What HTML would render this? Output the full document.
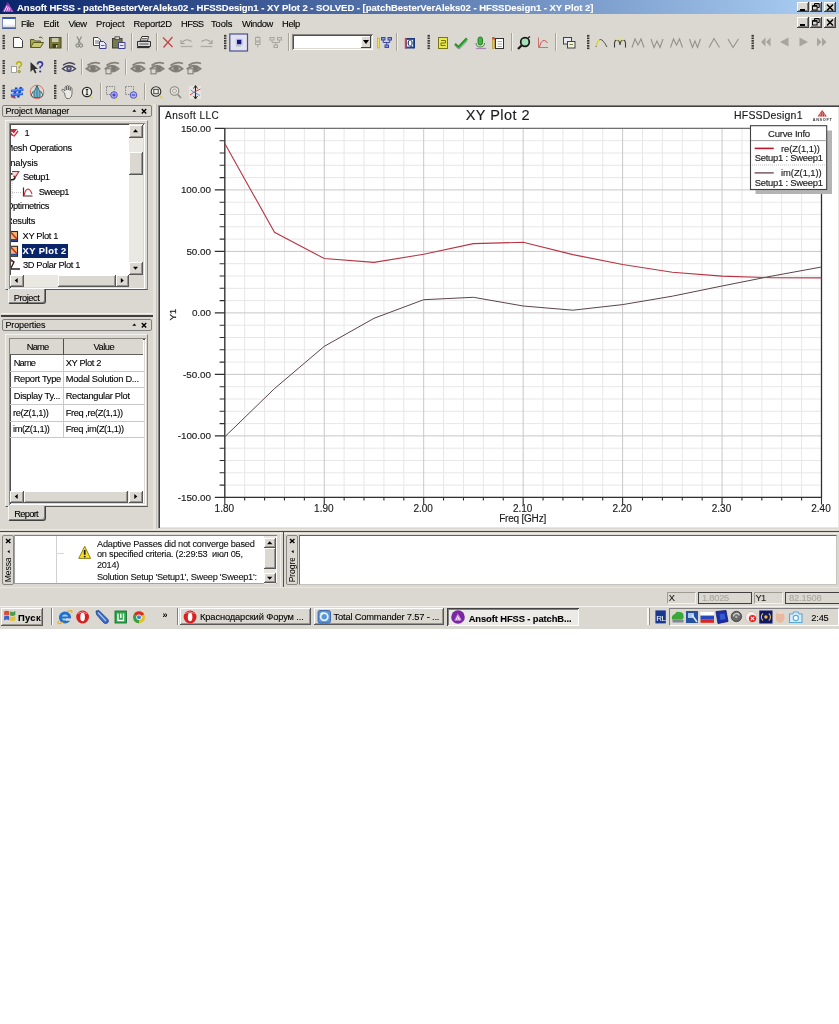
<!DOCTYPE html>
<html lang="en">
<head>
<meta charset="utf-8">
<title>Ansoft HFSS - XY Plot 2</title>
<style>
html,body{margin:0;padding:0;background:#fff;}
body{width:839px;height:1024px;position:relative;overflow:hidden;font-family:"Liberation Sans","DejaVu Sans",sans-serif;font-size:9px;color:#000;}
.abs{position:absolute;}
#app{position:absolute;left:0;top:0;width:839px;height:629px;background:#dbd8d1;overflow:hidden;will-change:transform;}
.t{position:absolute;white-space:pre;line-height:1;-webkit-text-stroke:0.1px currentColor;}
#titlebar{position:absolute;left:0;top:0;width:839px;height:14px;background:linear-gradient(to right,#0a246a 0%,#a6caf0 96%);}
#titlebar .t{color:#fff;font-weight:bold;font-size:9.55px;top:2.6px;left:17px;letter-spacing:-0.05px;}
.wbtn{position:absolute;width:12px;height:11px;background:#dbd8d1;box-shadow:inset -1px -1px 0 #404040,inset 1px 1px 0 #fff,inset -2px -2px 0 #808080;}
.menu .t{font-size:9.3px;top:18px;}
.grip{position:absolute;width:2px;height:17px;background:repeating-linear-gradient(to bottom,#404040 0,#404040 1.6px,#dbd8d1 1.6px,#dbd8d1 2.5px);}
.sep{position:absolute;width:1px;height:18px;background:#808080;box-shadow:1px 0 0 #fff;}
.sunken{position:absolute;background:#fff;box-shadow:inset 1px 1px 0 #8a8680,inset -1px -1px 0 #fff,inset 2px 2px 0 #505050,inset -2px -2px 0 #dbd8d1;}
.raised{position:absolute;background:#dbd8d1;box-shadow:inset -1px -1px 0 #585858,inset 1px 1px 0 #fff,inset -2px -2px 0 #9a968e;}
.panelhdr{position:absolute;height:12px;border:1px solid #808080;border-radius:2px;box-sizing:border-box;}
.ic{position:absolute;}
</style>
</head>
<body>
<div id="app">
<!--TITLEBAR-->
<div id="titlebar">
<svg class="ic" style="left:2px;top:2px" width="12" height="11" viewBox="0 0 12 11"><path d="M0 10 L5.5 0 L11.5 10 Z" fill="#7a2aa8"/><path d="M2.2 9.5 L5.2 3.6 M4.6 9.5 L6.4 4.6 M7 9.5 L7.4 5.6" stroke="#ffd0ff" stroke-width="1.1" fill="none"/><path d="M5.5 0 L11.5 10 L9 10 Z" fill="#c050c8"/></svg>
<span class="t">Ansoft HFSS - patchBesterVerAleks02 - HFSSDesign1 - XY Plot 2 - SOLVED - [patchBesterVerAleks02 - HFSSDesign1 - XY Plot 2]</span>
</div>
<!-- window buttons row 1 -->
<div class="wbtn" style="left:797px;top:1.500px;height:10.800px"><div class="abs" style="left:3px;top:7px;width:5px;height:2px;background:#000"></div></div>
<div class="wbtn" style="left:810px;top:1.500px;height:10.800px"><svg class="abs" style="left:2px;top:1px" width="8" height="8" viewBox="0 0 8 8"><path d="M2.5 0.8 H7.2 V4.5 H5.5 M2.5 0.8 V2.5" fill="none" stroke="#000" stroke-width="1"/><path d="M2.5 0.4 H7.2" stroke="#000" stroke-width="1.2"/><rect x="0.5" y="3" width="4.6" height="4" fill="none" stroke="#000" stroke-width="1"/><path d="M0.5 2.8 H5.1" stroke="#000" stroke-width="1.4"/></svg></div>
<div class="wbtn" style="left:824px;top:1.500px;height:10.800px"><svg class="abs" style="left:2px;top:2px" width="8" height="7" viewBox="0 0 8 7"><path d="M1 0.5 L7 6.5 M7 0.5 L1 6.5" stroke="#000" stroke-width="1.5"/></svg></div>
<!-- window buttons row 2 (MDI child) -->
<div class="wbtn" style="left:797px;top:16.800px;height:11.200px"><div class="abs" style="left:3px;top:7px;width:5px;height:2px;background:#000"></div></div>
<div class="wbtn" style="left:810px;top:16.800px;height:11.200px"><svg class="abs" style="left:2px;top:1px" width="8" height="8" viewBox="0 0 8 8"><path d="M2.5 0.8 H7.2 V4.5 H5.5 M2.5 0.8 V2.5" fill="none" stroke="#000" stroke-width="1"/><path d="M2.5 0.4 H7.2" stroke="#000" stroke-width="1.2"/><rect x="0.5" y="3" width="4.6" height="4" fill="none" stroke="#000" stroke-width="1"/><path d="M0.5 2.8 H5.1" stroke="#000" stroke-width="1.4"/></svg></div>
<div class="wbtn" style="left:824px;top:16.800px;height:11.200px"><svg class="abs" style="left:2px;top:2px" width="8" height="7" viewBox="0 0 8 7"><path d="M1 0.5 L7 6.5 M7 0.5 L1 6.5" stroke="#000" stroke-width="1.5"/></svg></div>

<!--MENU-->
<div class="menu">
<div class="abs" style="left:1.500px;top:16.500px;width:14px;height:11.500px;background:linear-gradient(to bottom,#fff 0,#fff 60%,#d8dce8 100%);border:1px solid #7088c0;border-top:2.500px solid #3058b0;box-sizing:border-box;box-shadow:0 1px 0 #506090"></div>
<span class="t" style="left:21.0px;top:18.7px;font-size:9.4px;letter-spacing:-0.537px;">File</span>
<span class="t" style="left:43.5px;top:18.7px;font-size:9.4px;letter-spacing:-0.175px;">Edit</span>
<span class="t" style="left:68.5px;top:18.7px;font-size:9.4px;letter-spacing:-0.551px;">View</span>
<span class="t" style="left:96.0px;top:18.7px;font-size:9.4px;letter-spacing:-0.108px;">Project</span>
<span class="t" style="left:133.5px;top:18.7px;font-size:9.4px;letter-spacing:-0.216px;">Report2D</span>
<span class="t" style="left:181.0px;top:18.7px;font-size:9.4px;letter-spacing:-0.643px;">HFSS</span>
<span class="t" style="left:211.0px;top:18.7px;font-size:9.4px;letter-spacing:-0.089px;">Tools</span>
<span class="t" style="left:242.0px;top:18.7px;font-size:9.4px;letter-spacing:-0.406px;">Window</span>
<span class="t" style="left:282.0px;top:18.7px;font-size:9.4px;letter-spacing:-0.333px;">Help</span>
</div>
<!--TOOLBARS-->
<svg class="abs" style="left:0;top:0" width="839" height="106" viewBox="0 0 839 106">
<defs>
<pattern id="gp" width="3" height="2.5" patternUnits="userSpaceOnUse"><rect width="3" height="1.7" fill="#3a3a3a"/></pattern>
</defs>
<!-- grips -->
<g fill="url(#gp)">
<rect x="2.5" y="34" width="2.4" height="16"/><rect x="224" y="34" width="2.4" height="16"/><rect x="427.5" y="34" width="2.4" height="16"/><rect x="587" y="34" width="2.4" height="16"/><rect x="751.5" y="34" width="2.4" height="16"/>
<rect x="2.5" y="60" width="2.4" height="14"/><rect x="54" y="60" width="2.4" height="14"/>
<rect x="2.5" y="84" width="2.4" height="15"/><rect x="54" y="84" width="2.4" height="15"/>
</g>
<!-- separators -->
<g stroke="#a8a49c" stroke-width="1">
<path d="M67.5 33V51M131.500 33V51M156.500 33V51M288.500 33V51M396.500 33V51M511.500 33V51M555.500 33V51"/>
<path d="M81.500 59V75M125.500 59V75"/>
<path d="M100.500 83V100M144.500 83V100"/>
</g>
<g stroke="#efede8" stroke-width="1">
<path d="M68.5 33V51M132.500 33V51M157.500 33V51M289.500 33V51M397.500 33V51M512.500 33V51M556.500 33V51"/>
<path d="M82.500 59V75M126.500 59V75"/>
<path d="M101.500 83V100M145.500 83V100"/>
</g>
<!-- ROW 1 -->
<!-- new -->
<path d="M13.500 37.500H19.500L22.500 40.500V47.500H13.500Z" fill="#fff" stroke="#404040" stroke-width="1"/>
<!-- open -->
<path d="M30.500 47V39.500H34L35.500 41H40.500V47Z" fill="#a8a850" stroke="#5a5a20" stroke-width="1"/><path d="M30.500 47.500L33.500 42.500H43.500L40.500 47.500Z" fill="#c8c870" stroke="#5a5a20" stroke-width="1"/><path d="M39 37.500Q41.500 36 42.500 38.500" fill="none" stroke="#5a5a20" stroke-width="1"/>
<!-- save -->
<rect x="49.500" y="37.500" width="11.500" height="10.500" fill="#787838" stroke="#484818" stroke-width="1"/><rect x="52" y="38" width="6.500" height="4" fill="#c8c8b0"/><rect x="52.500" y="44" width="5.500" height="4" fill="#404018"/><rect x="56" y="45" width="1.500" height="2.500" fill="#d0d0c0"/>
<!-- cut (gray) -->
<path d="M77 36.500L80.500 43.500M81.500 36.500L78 43.500" stroke="#8a8a86" stroke-width="1.200" fill="none"/><circle cx="77.500" cy="45.500" r="1.600" fill="none" stroke="#8a8a86" stroke-width="1.100"/><circle cx="81" cy="45.500" r="1.600" fill="none" stroke="#8a8a86" stroke-width="1.100"/>
<!-- copy -->
<path d="M93.500 37.500H98L100.500 40V45.500H93.500Z" fill="#fff" stroke="#404050" stroke-width="1"/><path d="M95 41H99M95 43H99" stroke="#404050" stroke-width="0.800"/>
<path d="M99.500 41.500H103.500L106 44V48.500H99.500Z" fill="#e8e8ff" stroke="#40408a" stroke-width="1"/><path d="M101 45.500H104.500" stroke="#40408a" stroke-width="0.800"/>
<!-- paste -->
<rect x="112.500" y="38.500" width="9.500" height="9.500" fill="#787850" stroke="#404030" stroke-width="1"/><rect x="115" y="36.800" width="4.500" height="2.800" fill="#d0d0d0" stroke="#404040" stroke-width="0.800"/>
<path d="M118.500 42.500H125V48.500H118.500Z" fill="#e8e8ff" stroke="#40408a" stroke-width="1"/><path d="M120 45.500H123.500" stroke="#40408a" stroke-width="0.800"/>
<!-- print -->
<path d="M140 41L142 36.500H148.500L147.500 41Z" fill="#fff" stroke="#303030" stroke-width="1"/><path d="M137.500 41.500H150.500V46.500H137.500Z" fill="#d8d8d8" stroke="#303030" stroke-width="1"/><path d="M137 47.500H149.500" stroke="#303030" stroke-width="1.300"/><path d="M142 38.500H147M141.500 40H146.500" stroke="#303030" stroke-width="0.700"/><path d="M139.500 44H148.500" stroke="#303030" stroke-width="0.800"/>
<!-- delete X -->
<path d="M163 37.500L172.500 47M172.500 37L163.500 47.500" stroke="#c84444" stroke-width="1.250" fill="none"/>
<!-- undo redo gray -->
<path d="M182 42.500Q186 37.500 191.500 41.500" fill="none" stroke="#a09c96" stroke-width="1.100"/><path d="M181 40V43.500H184.500" fill="none" stroke="#a09c96" stroke-width="1.100"/><path d="M180.500 46.500H192.500" stroke="#b0aca6" stroke-width="1.300"/>
<path d="M211 42.500Q207 37.500 201.500 41.500" fill="none" stroke="#a09c96" stroke-width="1.100"/><path d="M212 40V43.500H208.500" fill="none" stroke="#a09c96" stroke-width="1.100"/><path d="M200.500 46.500H212.500" stroke="#b0aca6" stroke-width="1.300"/>
<!-- pressed select button -->
<rect x="229.800" y="34" width="17.700" height="17" fill="#e2e2f0" stroke="#48508a" stroke-width="1.200"/><rect x="235.500" y="38.500" width="7.400" height="7" fill="#c8c8ec"/><rect x="237" y="39.800" width="4.300" height="4.400" fill="#181878"/><path d="M236 46H241" stroke="#98b098" stroke-width="0.800"/>
<!-- gray icons -->
<g stroke="#a8a49e" stroke-width="1" fill="none"><rect x="255.500" y="37.500" width="4.500" height="3.500"/><rect x="255.500" y="42" width="4.500" height="2.500"/><path d="M257.750 36V37.500M257.750 44.500V47.500"/></g>
<g stroke="#a8a49e" stroke-width="1" fill="none"><rect x="270" y="37.500" width="4" height="2.500"/><rect x="277.500" y="37.500" width="4" height="2.500"/><path d="M272 40V42.500H279.500V40M275.750 42.500V45"/><rect x="274" y="45" width="3.500" height="2.500"/></g>
<!-- yellow/blue tree icon -->
<g><rect x="377.500" y="38" width="2.200" height="10" fill="#f0e060" stroke="#b09820" stroke-width="0.500"/><g stroke="#3848a8" stroke-width="1" fill="#8898e0"><rect x="381.500" y="37.500" width="3.500" height="2.500"/><rect x="388" y="37.500" width="3.500" height="2.500"/><rect x="385" y="45" width="3.500" height="2.500"/></g><path d="M383.250 40V42.500H389.750V40M386.750 42.500V45" stroke="#3848a8" stroke-width="1" fill="none"/></g>
<!-- Q icon -->
<rect x="405.500" y="38.500" width="9" height="9.500" fill="#2858b0" stroke="#183878" stroke-width="1"/><rect x="407" y="40" width="6" height="6.500" fill="#fff"/><rect x="404.800" y="38" width="1.800" height="10.500" fill="#d84040"/><text x="407.300" y="46" font-family="Liberation Serif, serif" font-size="7.500" font-weight="bold" fill="#183878">Q</text>
<!-- yellow doc -->
<rect x="438.500" y="37.500" width="9" height="11" fill="#e8e850" stroke="#787818" stroke-width="1"/><path d="M441 40.500H445.500V43H441V45.500H445.500" fill="none" stroke="#686810" stroke-width="0.900"/>
<!-- green check -->
<path d="M455 44L458.500 47.500L467 38.500" fill="none" stroke="#38a838" stroke-width="2.600"/><path d="M456 46.500L459.500 49L467.500 41" fill="none" stroke="#a070b0" stroke-width="0.900" opacity="0.700"/><path d="M455 43.500L458.500 46.500L466.500 38" fill="none" stroke="#1a7a1a" stroke-width="0.800"/>
<!-- green mic -->
<rect x="478" y="37" width="4.500" height="8" rx="2.200" fill="#48b048" stroke="#1a7a1a" stroke-width="0.900"/><path d="M476 43Q476 47 480.250 47Q484.500 47 484.500 43" fill="none" stroke="#488848" stroke-width="1"/><path d="M476 48.500H486" stroke="#a070b0" stroke-width="1.200" opacity="0.800"/>
<!-- doc list -->
<rect x="495.500" y="38.500" width="8" height="10" fill="#fff" stroke="#303030" stroke-width="1"/><path d="M497.500 41.500H502M497.500 44H502M497.500 46.500H502" stroke="#707070" stroke-width="0.600"/><rect x="492.500" y="37.500" width="2.200" height="11" fill="#e8c850" stroke="#a07818" stroke-width="0.500"/><rect x="492.500" y="37.500" width="2.200" height="2" fill="#d84040"/>
<!-- magnifier w/ green -->
<circle cx="525" cy="42" r="4.300" fill="#a8e0b8" stroke="#181818" stroke-width="1.700"/><path d="M521.500 45.500L518 49" stroke="#181818" stroke-width="2.200"/><path d="M528 38L530 36.500" stroke="#181818" stroke-width="1.200"/>
<!-- red plot -->
<path d="M538.500 37.500V47.500H548" fill="none" stroke="#c86868" stroke-width="0.900"/><path d="M539.500 47Q541 40 544.500 40.500Q546.500 41 547.500 43" fill="none" stroke="#d05050" stroke-width="1"/>
<!-- windows icon -->
<rect x="563.500" y="37.500" width="8" height="6.500" fill="#e8e8f0" stroke="#404048" stroke-width="1"/><rect x="567.500" y="41.500" width="7.500" height="6.500" fill="#f0f0e0" stroke="#404048" stroke-width="1"/><path d="M569.500 44.500H573" stroke="#808048" stroke-width="1"/>
<!-- marker icons -->
<path d="M596 47Q598 39.500 600.500 39.500Q603 39.500 607 47" fill="none" stroke="#505050" stroke-width="1"/><path d="M596.500 46L599 40" stroke="#e8e840" stroke-width="1.600"/>
<path d="M614.500 47.500V43Q615 39.500 617.500 40Q619.500 40.500 620 45Q620.500 40.500 622.500 40Q625 39.500 625.500 43V47.500" fill="none" stroke="#404040" stroke-width="1.100"/><path d="M616 39.500H624" stroke="#e8e840" stroke-width="1.500"/>
<g fill="none" stroke="#959189" stroke-width="1.100">
<path d="M632 47.500L635 39L638 45L641 39L644 47.500"/>
<path d="M651 39L654 47.500L657 41L660 47.500L663 39"/>
<path d="M670.500 47.500L673.500 39L676.500 45L679.500 39L682.500 47.500"/>
<path d="M689.500 39L692.500 47.500L695 41L697.500 47.500L700.500 39"/>
<path d="M709 47.500L714 38.500L719.500 47.500"/>
<path d="M728 39L733 47.500L738.500 39"/>
</g>
<!-- nav arrows -->
<g fill="#a8a49e">
<path d="M765.500 37.500V46.500L761 42ZM770.500 37.500V46.500L766 42Z"/>
<path d="M788.500 37.500V46.500L780 42Z"/>
<path d="M799.500 37.500V46.500L808 42Z"/>
<path d="M817 37.500V46.500L821.500 42ZM822 37.500V46.500L826.500 42Z"/>
</g>
<!-- ROW 2 -->
<!-- help 1 -->
<rect x="11.500" y="66.500" width="5" height="6" fill="#fff" stroke="#909090" stroke-width="0.800"/><path d="M16.500 64.500Q16.500 61.800 19 61.800Q21.500 61.800 21.500 64.200Q21.500 66 19.200 67V68.500" fill="none" stroke="#d8d020" stroke-width="1.700"/><circle cx="19.200" cy="71.500" r="1.200" fill="#d8d020" stroke="#605808" stroke-width="0.500"/><path d="M16.500 64.500Q16.500 61.800 19 61.800Q21.500 61.800 21.500 64.200Q21.500 66 19.200 67V68.500" fill="none" stroke="#605808" stroke-width="0.400"/>
<!-- help 2 -->
<path d="M30.500 62V72L33 69.500L35 73.500L36.500 72.800L34.800 69H38Z" fill="#303030"/><path d="M37.500 64.500Q37.500 61.800 40 61.800Q42.500 61.800 42.500 64.200Q42.500 66 40.200 67V68.500" fill="none" stroke="#3838a0" stroke-width="1.700"/><circle cx="40.200" cy="71.500" r="1.100" fill="#3838a0"/>
<!-- eye dark -->
<g transform="translate(62.500,62.300)"><path d="M0 6.500Q6.500 0.500 13 6.500Q6.500 12 0 6.500Z" fill="#e8e8f0" stroke="#404058" stroke-width="1.400"/><circle cx="6.500" cy="6.300" r="2.700" fill="#505070"/><circle cx="6.500" cy="6.300" r="1" fill="#d0d0e0"/><path d="M0.500 3Q6.500 -1.500 12.500 2.200" fill="none" stroke="#404058" stroke-width="1.400"/></g>
<g transform="translate(86.500,62.300)"><path d="M0 6.500Q6.500 0.500 13 6.500Q6.500 12 0 6.500Z" fill="#c6c3bc" stroke="#85827c" stroke-width="1.900"/><circle cx="6.500" cy="6.300" r="2.700" fill="#7c7a74"/><path d="M1 3.200Q6.500 -1.300 13.500 1.200" fill="none" stroke="#85827c" stroke-width="1.700"/></g><g transform="translate(105.500,62.300)"><path d="M0 6.500Q6.500 0.500 13 6.500Q6.500 12 0 6.500Z" fill="#c6c3bc" stroke="#85827c" stroke-width="1.900"/><circle cx="8" cy="6" r="2.500" fill="#7c7a74"/><path d="M1 3.200Q6.500 -1.300 13.500 1.200" fill="none" stroke="#85827c" stroke-width="1.700"/><rect x="0.500" y="6.500" width="5" height="5" fill="#dbd8d1" stroke="#85827c" stroke-width="1.100"/></g>
<g transform="translate(131.500,62.300)"><path d="M0 6.500Q6.500 0.500 13 6.500Q6.500 12 0 6.500Z" fill="#c6c3bc" stroke="#85827c" stroke-width="1.900"/><circle cx="6.500" cy="6.300" r="2.700" fill="#7c7a74"/><path d="M1 3.200Q6.500 -1.300 13.500 1.200" fill="none" stroke="#85827c" stroke-width="1.700"/></g><g transform="translate(150.500,62.300)"><path d="M0 6.500Q6.500 0.500 13 6.500Q6.500 12 0 6.500Z" fill="#c6c3bc" stroke="#85827c" stroke-width="1.900"/><circle cx="8" cy="6" r="2.500" fill="#7c7a74"/><path d="M1 3.200Q6.500 -1.300 13.500 1.200" fill="none" stroke="#85827c" stroke-width="1.700"/><rect x="0.500" y="6.500" width="5" height="5" fill="#dbd8d1" stroke="#85827c" stroke-width="1.100"/></g><g transform="translate(169.500,62.300)"><path d="M0 6.500Q6.500 0.500 13 6.500Q6.500 12 0 6.500Z" fill="#c6c3bc" stroke="#85827c" stroke-width="1.900"/><circle cx="6.500" cy="6.300" r="2.700" fill="#7c7a74"/><path d="M1 3.200Q6.500 -1.300 13.500 1.200" fill="none" stroke="#85827c" stroke-width="1.700"/></g><g transform="translate(187.500,62.300)"><path d="M0 6.500Q6.500 0.500 13 6.500Q6.500 12 0 6.500Z" fill="#c6c3bc" stroke="#85827c" stroke-width="1.900"/><circle cx="8" cy="6" r="2.500" fill="#7c7a74"/><path d="M1 3.200Q6.500 -1.300 13.500 1.200" fill="none" stroke="#85827c" stroke-width="1.700"/><rect x="0.500" y="6.500" width="5" height="5" fill="#dbd8d1" stroke="#85827c" stroke-width="1.100"/></g>
<!-- ROW 3 -->
<!-- blue python-like icon -->
<g><path d="M13.500 97.500L16.500 87.500M18 97.500L21 87" stroke="#1848c8" stroke-width="2.600"/><path d="M11 91L23.500 89.500M10.800 95.300L23 93.800" stroke="#2868e8" stroke-width="2.400"/><path d="M11 96.500L15.500 98" stroke="#d83838" stroke-width="1.400"/><path d="M12 90.300L22.500 89.200M12 94.500L22 93.500" stroke="#80b0ff" stroke-width="0.700"/></g>
<!-- rocket icon -->
<circle cx="37" cy="92" r="6.800" fill="none" stroke="#e07060" stroke-width="1"/><path d="M37 85.500L40 92V97.500H34V92Z" fill="#70b8d0" stroke="#205868" stroke-width="0.800"/><path d="M33 97.500L31 95L33.500 91M41 97.500L43 95L40.500 91" fill="none" stroke="#205868" stroke-width="0.900"/><path d="M37 86V97.500" stroke="#205868" stroke-width="0.700"/>
<!-- hand -->
<path d="M64.500 93L62 90.500Q61.500 89 63 89.200L65 91V87Q65.800 85.800 66.600 87V90V86Q67.500 84.800 68.400 86V90V86.500Q69.300 85.400 70.200 86.500V90.500V88Q71.200 87 72 88.200V94Q71.500 97.500 69.500 98.500H66.500Q65 97 64.500 93Z" fill="#eceae4" stroke="#585858" stroke-width="0.800"/>
<!-- (I) -->
<circle cx="87" cy="92" r="4.600" fill="#f0f0e8" stroke="#282828" stroke-width="1.200"/><path d="M87 89.500V94.500M85.800 89.500H88.200M85.800 94.500H88.200" stroke="#282828" stroke-width="1.100"/><path d="M90 96.500L92.500 98.500" stroke="#d8d060" stroke-width="1.500"/>
<!-- zoom in box -->
<rect x="106.500" y="86.500" width="8" height="8" fill="none" stroke="#707070" stroke-width="0.800" stroke-dasharray="1.500 1"/><path d="M116 97.500L118 100" stroke="#e8e060" stroke-width="1.500"/><circle cx="114" cy="95" r="3.300" fill="#b4b4ff" stroke="#4848b8" stroke-width="0.900"/><path d="M112.300 95H115.700M114 93.300V96.700" stroke="#2828a8" stroke-width="1"/>
<!-- zoom out box -->
<rect x="125.500" y="86.500" width="8" height="8" fill="none" stroke="#707070" stroke-width="0.800" stroke-dasharray="1.500 1"/><path d="M135.500 97.500L137.500 100" stroke="#e8e060" stroke-width="1.500"/><circle cx="133.500" cy="95" r="3.300" fill="#b4b4ff" stroke="#4848b8" stroke-width="0.900"/><path d="M131.800 95H135.200" stroke="#2828a8" stroke-width="1"/>
<!-- fit -->
<circle cx="156" cy="91.500" r="4.800" fill="#f0f0e8" stroke="#303030" stroke-width="1.100"/><rect x="153.800" y="89.300" width="4.400" height="4.400" fill="none" stroke="#303030" stroke-width="0.900"/><path d="M159.500 95.500L162.500 98.500" stroke="#d8d060" stroke-width="1.600"/>
<!-- magnifier gray -->
<circle cx="174.500" cy="91" r="4.300" fill="#e4e2dc" stroke="#8a8882" stroke-width="1.100"/><circle cx="174.500" cy="91" r="2" fill="none" stroke="#a09c96" stroke-width="0.800"/><path d="M177.800 94.500L181 98" stroke="#8a8882" stroke-width="1.600"/>
<!-- axis icon -->
<rect x="189" y="86" width="12" height="13" fill="#eceae6" opacity="0.800"/><path d="M195.500 86V98.500" stroke="#202020" stroke-width="1.100"/><path d="M193.500 88.500L195.500 85.500L197.500 88.500M193.500 96L195.500 99L197.500 96" fill="none" stroke="#202020" stroke-width="0.900"/><path d="M190 95Q195 91 200.500 89" fill="none" stroke="#d84848" stroke-width="1"/><path d="M190.500 90Q195 93 200 95.500" fill="none" stroke="#4880d8" stroke-width="0.800"/>
</svg>
<!-- combo box -->
<div class="sunken" style="left:292px;top:34px;width:81px;height:16px"></div>
<div class="raised" style="left:361px;top:36px;width:10px;height:12px;box-shadow:inset -1px -1px 0 #404040,inset 1px 1px 0 #fff"><div class="abs" style="left:2px;top:4px;width:0;height:0;border-left:3px solid transparent;border-right:3px solid transparent;border-top:4px solid #000"></div></div>

<!--LEFTPANELS-->
<div class="abs" style="left:153px;top:104px;width:3px;height:425px;background:#e6e3dd"></div>
<div class="abs" style="left:156px;top:104px;width:1px;height:425px;background:#c4c0b8"></div>
<div class="panelhdr" style="left:2px;top:105px;width:150px"></div>
<span class="t" style="left:5.4px;top:107.0px;font-size:9px;letter-spacing:-0.156px;">Project Manager</span>
<svg class="abs" style="left:131px;top:108px" width="18" height="7" viewBox="0 0 18 7"><path d="M1.3 3.8L3.3 1.6L5.3 3.8Z" fill="#000"/><path d="M10.8 1L15.2 5.4M15.2 1L10.8 5.4" stroke="#000" stroke-width="1.4"/></svg>
<div class="abs" style="left:5px;top:120px;width:143px;height:170px;box-sizing:border-box;border:1px solid;border-color:#f4f2ee #8a8680 #5a5852 #f4f2ee"></div>
<div class="sunken" style="left:9px;top:123px;width:136px;height:166px"></div>
<div class="abs" style="left:11px;top:125px;width:118px;height:150px;overflow:hidden">
<div class="abs" style="left:10.500px;top:118.600px;width:46.500px;height:14px;background:#0a246a"></div>
<span class="t" style="left:13.4px;top:3.9px;font-size:9.3px;">1</span>
<span class="t" style="left:-5.5px;top:19.0px;font-size:9.3px;letter-spacing:-0.288px;">Mesh Operations</span>
<span class="t" style="left:-6.8px;top:33.7px;font-size:9.3px;letter-spacing:-0.116px;">Analysis</span>
<span class="t" style="left:12.0px;top:48.0px;font-size:9.3px;letter-spacing:-0.496px;">Setup1</span>
<span class="t" style="left:27.7px;top:63.1px;font-size:9.3px;letter-spacing:-0.551px;">Sweep1</span>
<span class="t" style="left:-4.8px;top:77.4px;font-size:9.3px;letter-spacing:-0.393px;">Optimetrics</span>
<span class="t" style="left:-5.0px;top:92.0px;font-size:9.3px;letter-spacing:-0.287px;">Results</span>
<span class="t" style="left:11.6px;top:106.9px;font-size:9.3px;letter-spacing:-0.356px;">XY Plot 1</span>
<span class="t" style="left:11.6px;top:121.8px;font-size:9.3px;letter-spacing:0.428px;font-weight:bold;color:#fff;">XY Plot 2</span>
<span class="t" style="left:12.0px;top:136.4px;font-size:9.3px;letter-spacing:-0.370px;">3D Polar Plot 1</span>
<svg class="abs" style="left:0;top:0" width="118" height="150" viewBox="11 125 118 150">
<path d="M10.500 129H17L18.500 131.500L14.500 136.800L10.500 135Z" fill="#cc2838"/><path d="M11.500 132L13.800 134.500L17.300 129.800" fill="none" stroke="#fff" stroke-width="1.200"/>
<circle cx="12" cy="176.800" r="3" fill="none" stroke="#181818" stroke-width="1.500"/><path d="M12 171.500H18.800L16 176.300H13" fill="#f4d8d8" stroke="#b82828" stroke-width="1.100"/>
<path d="M12 181V198" stroke="#c0c0c0" stroke-width="1" stroke-dasharray="1 1"/><path d="M12 192.500H21" stroke="#c0c0c0" stroke-width="1" stroke-dasharray="1 1"/>
<path d="M23.500 187.500V196H32.500" fill="none" stroke="#582020" stroke-width="1.200"/><path d="M24 195.500Q25.500 189 28 189Q30.500 189.500 32 194" fill="none" stroke="#d03030" stroke-width="1.200"/>
<g><rect x="10" y="231.500" width="7.500" height="10" fill="#f0b870" stroke="#282828" stroke-width="1.100"/><path d="M10.500 232L17 239" stroke="#d03020" stroke-width="1.600"/><rect x="10.500" y="239" width="6.500" height="2" fill="#2848a0"/></g>
<g transform="translate(0,14.800)"><rect x="10" y="231.500" width="7.500" height="10" fill="#f0b870" stroke="#282828" stroke-width="1.100"/><path d="M10.500 232L17 239" stroke="#d03020" stroke-width="1.600"/><rect x="10.500" y="239" width="6.500" height="2" fill="#2848a0"/></g>
<path d="M10 259L14 262L10.500 269H20" fill="none" stroke="#282020" stroke-width="1.400"/><path d="M9.500 259.500L13 262" stroke="#c03020" stroke-width="1.500"/>
</svg>
</div>
<div class="abs" style="left:129px;top:124px;width:14px;height:151px;background:#eae8e3"></div>
<div class="raised" style="left:129px;top:125px;width:14px;height:13px"></div>
<svg class="abs" style="left:0;top:0;pointer-events:none" width="839" height="629"><path d="M133.0 132.2L135.5 129.2L138.0 132.2Z" fill="#000"/></svg>
<div class="raised" style="left:129px;top:152px;width:14px;height:23px"></div>
<div class="raised" style="left:129px;top:262px;width:14px;height:13px"></div>
<svg class="abs" style="left:0;top:0;pointer-events:none" width="839" height="629"><path d="M133.0 266.8L135.5 269.8L138.0 266.8Z" fill="#000"/></svg>
<div class="abs" style="left:10px;top:275px;width:119px;height:12px;background:#eae8e3"></div>
<div class="raised" style="left:10px;top:275px;width:14px;height:12px"></div>
<svg class="abs" style="left:0;top:0;pointer-events:none" width="839" height="629"><path d="M17.7 278.0L14.7 280.5L17.7 283.0Z" fill="#000"/></svg>
<div class="raised" style="left:58px;top:275px;width:58px;height:12px"></div>
<div class="raised" style="left:116px;top:275px;width:13px;height:12px"></div>
<svg class="abs" style="left:0;top:0;pointer-events:none" width="839" height="629"><path d="M120.8 278.0L123.8 280.5L120.8 283.0Z" fill="#000"/></svg>
<div class="abs" style="left:129px;top:275px;width:14px;height:12px;background:#dbd8d1"></div>
<div class="abs" style="left:8px;top:289px;width:38px;height:15px;box-sizing:border-box;background:#dbd8d1;border-left:1px solid #f4f2ee;border-right:1px solid #404040;border-bottom:1px solid #404040;border-radius:0 0 3px 2px;box-shadow:inset -1px -1px 0 #808080"></div>
<span class="t" style="left:13.7px;top:293.7px;font-size:9.3px;letter-spacing:-0.478px;">Project</span>
<div class="abs" style="left:1px;top:313px;width:152px;height:1px;background:#f4f2ee"></div>
<div class="abs" style="left:1px;top:315px;width:152px;height:1.500px;background:#404040"></div>
<div class="panelhdr" style="left:2px;top:319px;width:150px"></div>
<span class="t" style="left:5.4px;top:321.0px;font-size:9px;letter-spacing:-0.102px;">Properties</span>
<svg class="abs" style="left:131px;top:322px" width="18" height="7" viewBox="0 0 18 7"><path d="M1.3 3.8L3.3 1.6L5.3 3.8Z" fill="#000"/><path d="M10.8 1L15.2 5.4M15.2 1L10.8 5.4" stroke="#000" stroke-width="1.4"/></svg>
<div class="abs" style="left:5px;top:334px;width:143px;height:173px;box-sizing:border-box;border:1px solid;border-color:#f4f2ee #8a8680 #5a5852 #f4f2ee"></div>
<div class="sunken" style="left:9px;top:337.500px;width:137px;height:167.500px"></div>
<div class="abs" style="left:10px;top:339px;width:133px;height:16px;background:#dbd8d1;border-bottom:1.500px solid #606060;box-sizing:border-box"></div>
<div class="abs" style="left:62.500px;top:339px;width:1.500px;height:16px;background:#505050"></div>
<span class="t" style="left:26.8px;top:342.9px;font-size:9.3px;letter-spacing:-0.827px;">Name</span>
<span class="t" style="left:93.4px;top:342.9px;font-size:9.3px;letter-spacing:-0.459px;">Value</span>
<span class="t" style="left:13.7px;top:358.9px;font-size:9.3px;letter-spacing:-0.827px;">Name</span>
<span class="t" style="left:65.7px;top:358.9px;font-size:9.3px;letter-spacing:-0.367px;">XY Plot 2</span>
<div class="abs" style="left:10px;top:370.7px;width:134px;height:1px;background:#c8c8c8"></div>
<span class="t" style="left:13.7px;top:375.4px;font-size:9.3px;letter-spacing:-0.290px;">Report Type</span>
<span class="t" style="left:65.7px;top:375.4px;font-size:9.3px;letter-spacing:-0.293px;">Modal Solution D...</span>
<div class="abs" style="left:10px;top:387.2px;width:134px;height:1px;background:#c8c8c8"></div>
<span class="t" style="left:13.7px;top:392.2px;font-size:9.3px;letter-spacing:-0.253px;">Display Ty...</span>
<span class="t" style="left:65.7px;top:392.2px;font-size:9.3px;letter-spacing:-0.297px;">Rectangular Plot</span>
<div class="abs" style="left:10px;top:404.0px;width:134px;height:1px;background:#c8c8c8"></div>
<span class="t" style="left:13.0px;top:408.8px;font-size:9.3px;letter-spacing:-0.377px;">re(Z(1,1))</span>
<span class="t" style="left:65.7px;top:408.8px;font-size:9.3px;letter-spacing:-0.410px;">Freq ,re(Z(1,1))</span>
<div class="abs" style="left:10px;top:420.6px;width:134px;height:1px;background:#c8c8c8"></div>
<span class="t" style="left:13.0px;top:425.0px;font-size:9.3px;letter-spacing:-0.431px;">im(Z(1,1))</span>
<span class="t" style="left:65.7px;top:425.0px;font-size:9.3px;letter-spacing:-0.444px;">Freq ,im(Z(1,1))</span>
<div class="abs" style="left:10px;top:436.8px;width:134px;height:1px;background:#c8c8c8"></div>
<div class="abs" style="left:63px;top:355px;width:1px;height:82px;background:#c8c8c8"></div>
<div class="abs" style="left:10px;top:491px;width:133px;height:12px;background:#eae8e3"></div>
<div class="raised" style="left:10px;top:491px;width:14px;height:12px"></div>
<svg class="abs" style="left:0;top:0;pointer-events:none" width="839" height="629"><path d="M17.7 494.0L14.7 496.5L17.7 499.0Z" fill="#000"/></svg>
<div class="raised" style="left:24px;top:491px;width:104px;height:12px"></div>
<div class="raised" style="left:129px;top:491px;width:14px;height:12px"></div>
<svg class="abs" style="left:0;top:0;pointer-events:none" width="839" height="629"><path d="M134.3 494.0L137.3 496.5L134.3 499.0Z" fill="#000"/></svg>
<div class="abs" style="left:8px;top:506px;width:38px;height:15px;box-sizing:border-box;background:#dbd8d1;border-left:1px solid #f4f2ee;border-right:1px solid #404040;border-bottom:1px solid #404040;border-radius:0 0 3px 2px;box-shadow:inset -1px -1px 0 #808080"></div>
<span class="t" style="left:14.3px;top:510.4px;font-size:9.3px;letter-spacing:-0.702px;">Report</span>
<!--PLOT-->
<div class="abs" style="left:158px;top:105px;width:681px;height:423px;background:#fff;box-sizing:border-box;border-top:1px solid #808080;border-left:1px solid #808080;box-shadow:inset 1px 1px 0 #404040, inset -1px -1px 0 #e8e6e0"></div>
<svg class="abs" style="left:0;top:0" width="839" height="629" viewBox="0 0 839 629" font-family="Liberation Sans, sans-serif" fill="#1c1c1c">
<path d="M244.69 128.4V497.4M264.58 128.4V497.4M284.47 128.4V497.4M304.36 128.4V497.4M344.14 128.4V497.4M364.03 128.4V497.4M383.92 128.4V497.4M403.81 128.4V497.4M443.59 128.4V497.4M463.48 128.4V497.4M483.37 128.4V497.4M503.26 128.4V497.4M543.04 128.4V497.4M562.93 128.4V497.4M582.82 128.4V497.4M602.71 128.4V497.4M642.49 128.4V497.4M662.38 128.4V497.4M682.27 128.4V497.4M702.16 128.4V497.4M741.94 128.4V497.4M761.83 128.4V497.4M781.72 128.4V497.4M801.61 128.4V497.4M224.8 140.70H821.5M224.8 153.00H821.5M224.8 165.30H821.5M224.8 177.60H821.5M224.8 202.20H821.5M224.8 214.50H821.5M224.8 226.80H821.5M224.8 239.10H821.5M224.8 263.70H821.5M224.8 276.00H821.5M224.8 288.30H821.5M224.8 300.60H821.5M224.8 325.20H821.5M224.8 337.50H821.5M224.8 349.80H821.5M224.8 362.10H821.5M224.8 386.70H821.5M224.8 399.00H821.5M224.8 411.30H821.5M224.8 423.60H821.5M224.8 448.20H821.5M224.8 460.50H821.5M224.8 472.80H821.5M224.8 485.10H821.5" stroke="#e7e7e7" stroke-width="1" fill="none"/>
<path d="M224.80 128.4V497.4M324.25 128.4V497.4M423.70 128.4V497.4M523.15 128.4V497.4M622.60 128.4V497.4M722.05 128.4V497.4M821.50 128.4V497.4M224.8 128.40H821.5M224.8 189.90H821.5M224.8 251.40H821.5M224.8 312.90H821.5M224.8 374.40H821.5M224.8 435.90H821.5M224.8 497.40H821.5" stroke="#c8c8c8" stroke-width="1" fill="none"/>
<path d="M214.80 128.40H224.8M219.60 140.70H224.8M219.60 153.00H224.8M219.60 165.30H224.8M219.60 177.60H224.8M214.80 189.90H224.8M219.60 202.20H224.8M219.60 214.50H224.8M219.60 226.80H224.8M219.60 239.10H224.8M214.80 251.40H224.8M219.60 263.70H224.8M219.60 276.00H224.8M219.60 288.30H224.8M219.60 300.60H224.8M214.80 312.90H224.8M219.60 325.20H224.8M219.60 337.50H224.8M219.60 349.80H224.8M219.60 362.10H224.8M214.80 374.40H224.8M219.60 386.70H224.8M219.60 399.00H224.8M219.60 411.30H224.8M219.60 423.60H224.8M214.80 435.90H224.8M219.60 448.20H224.8M219.60 460.50H224.8M219.60 472.80H224.8M219.60 485.10H224.8M214.80 497.40H224.8M224.80 497.4V504.40M244.69 497.4V500.60M264.58 497.4V500.60M284.47 497.4V500.60M304.36 497.4V500.60M324.25 497.4V504.40M344.14 497.4V500.60M364.03 497.4V500.60M383.92 497.4V500.60M403.81 497.4V500.60M423.70 497.4V504.40M443.59 497.4V500.60M463.48 497.4V500.60M483.37 497.4V500.60M503.26 497.4V500.60M523.15 497.4V504.40M543.04 497.4V500.60M562.93 497.4V500.60M582.82 497.4V500.60M602.71 497.4V500.60M622.60 497.4V504.40M642.49 497.4V500.60M662.38 497.4V500.60M682.27 497.4V500.60M702.16 497.4V500.60M722.05 497.4V504.40M741.94 497.4V500.60M761.83 497.4V500.60M781.72 497.4V500.60M801.61 497.4V500.60M821.50 497.4V504.40" stroke="#303030" stroke-width="1.1" fill="none"/>
<path d="M224.8 128.4H821.5" stroke="#707070" stroke-width="1.1" fill="none"/>
<path d="M224.8 127.9V497.4H821.5V127.9" stroke="#303030" stroke-width="1.3" fill="none"/>
<polyline points="224.8,436.8 274.5,388.6 324.2,346.4 374.0,318.3 423.7,299.7 473.4,297.3 523.2,306 572.9,310.2 622.6,304.6 672.3,296.2 722.0,286 771.8,276.1 821.5,267" fill="none" stroke="#5c444a" stroke-width="1"/>
<polyline points="224.8,143.6 274.5,232.3 324.2,258.5 374.0,262.4 423.7,254.3 473.4,243.6 523.2,242.3 572.9,254.6 622.6,264.5 672.3,272.2 722.0,276.1 771.8,277.7 821.5,277.9" fill="none" stroke="#b83444" stroke-width="1.1"/>
<rect x="755.5" y="130.500" width="76.500" height="63.500" fill="#b4b4b4"/>
<rect x="750.500" y="125.700" width="76.200" height="63.800" fill="#fff" stroke="#404040" stroke-width="1.1"/>
<path d="M751 140.600H826.500" stroke="#a0a0a0" stroke-width="1"/>
<path d="M752 165H825.500" stroke="#b0b0b8" stroke-width="0.8" stroke-dasharray="1 1"/>
<path d="M754.700 148.400H773.700" stroke="#c01828" stroke-width="1.6"/>
<path d="M754.700 172.900H773.700" stroke="#684048" stroke-width="1.3"/>
<text x="768" y="136.8" font-size="9.6" letter-spacing="-0.229" stroke="#1c1c1c" stroke-width="0.15" >Curve Info</text>
<text x="781" y="151.7" font-size="9.4" letter-spacing="-0.069" stroke="#1c1c1c" stroke-width="0.15" >re(Z(1,1))</text>
<text x="754.7" y="161.3" font-size="9.4" letter-spacing="-0.220" stroke="#1c1c1c" stroke-width="0.15" >Setup1 : Sweep1</text>
<text x="781" y="176.2" font-size="9.4" letter-spacing="-0.045" stroke="#1c1c1c" stroke-width="0.15" >im(Z(1,1))</text>
<text x="754.7" y="185.8" font-size="9.4" letter-spacing="-0.220" stroke="#1c1c1c" stroke-width="0.15" >Setup1 : Sweep1</text>
<text x="165" y="118.5" font-size="10" letter-spacing="0.473" stroke="#1c1c1c" stroke-width="0.15" >Ansoft LLC</text>
<text x="465.7" y="119.7" font-size="14.5" letter-spacing="0.468" stroke="#1c1c1c" stroke-width="0.15" >XY Plot 2</text>
<text x="734" y="118.6" font-size="10.5" letter-spacing="0.197" stroke="#1c1c1c" stroke-width="0.15" >HFSSDesign1</text>
<path d="M822.200 110L826.800 116.600H817.600Z" fill="#c02020"/><path d="M822.200 111.500V116.600M820.600 113.500L819.600 116.600M823.800 113.500L824.800 116.600" stroke="#fff" stroke-width="0.6"/>
<text x="812.7" y="120.8" font-size="3.8" letter-spacing="0.698" stroke="#1c1c1c" stroke-width="0.15" font-weight="bold" fill="#303030" stroke-opacity="0">ANSOFT</text>
<text x="180.9" y="131.5" font-size="9.9" letter-spacing="-0.034" stroke="#1c1c1c" stroke-width="0.15" >150.00</text>
<text x="180.9" y="193.0" font-size="9.9" letter-spacing="-0.034" stroke="#1c1c1c" stroke-width="0.15" >100.00</text>
<text x="186.4" y="254.5" font-size="9.9" letter-spacing="-0.034" stroke="#1c1c1c" stroke-width="0.15" >50.00</text>
<text x="191.9" y="316.0" font-size="9.9" letter-spacing="-0.033" stroke="#1c1c1c" stroke-width="0.15" >0.00</text>
<text x="183.1" y="377.5" font-size="9.9" letter-spacing="-0.032" stroke="#1c1c1c" stroke-width="0.15" >-50.00</text>
<text x="177.7" y="439.0" font-size="9.9" letter-spacing="-0.033" stroke="#1c1c1c" stroke-width="0.15" >-100.00</text>
<text x="177.7" y="500.5" font-size="9.9" letter-spacing="-0.033" stroke="#1c1c1c" stroke-width="0.15" >-150.00</text>
<text x="214.6" y="511.7" font-size="10" letter-spacing="-0.016" stroke="#1c1c1c" stroke-width="0.15" >1.80</text>
<text x="314.1" y="511.7" font-size="10" letter-spacing="-0.016" stroke="#1c1c1c" stroke-width="0.15" >1.90</text>
<text x="413.5" y="511.7" font-size="10" letter-spacing="-0.016" stroke="#1c1c1c" stroke-width="0.15" >2.00</text>
<text x="513.0" y="511.7" font-size="10" letter-spacing="-0.016" stroke="#1c1c1c" stroke-width="0.15" >2.10</text>
<text x="612.4" y="511.7" font-size="10" letter-spacing="-0.016" stroke="#1c1c1c" stroke-width="0.15" >2.20</text>
<text x="711.8" y="511.7" font-size="10" letter-spacing="-0.016" stroke="#1c1c1c" stroke-width="0.15" >2.30</text>
<text x="811.3" y="511.7" font-size="10" letter-spacing="-0.016" stroke="#1c1c1c" stroke-width="0.15" >2.40</text>
<text x="499.2" y="521.6" font-size="10" letter-spacing="-0.210" stroke="#1c1c1c" stroke-width="0.15" >Freq [GHz]</text>
<text transform="translate(175.600,320.500) rotate(-90)" font-size="9.800" letter-spacing="-0.3" stroke="#1c1c1c" stroke-width="0.2">Y1</text>
</svg>
<!--BOTTOM-->
<div class="abs" style="left:0;top:529px;width:839px;height:1px;background:#e8e6e0"></div>
<div class="abs" style="left:0;top:530.900px;width:839px;height:1.600px;background:#484848"></div>
<div class="abs" style="left:0;top:532.500px;width:839px;height:1px;background:#f0eee8"></div>
<div class="abs" style="left:2.1px;top:534.500px;width:11.500px;height:50.500px;box-sizing:border-box;border:1px solid #8a8680;border-radius:2px"></div>
<svg class="abs" style="left:2.1px;top:535px" width="12" height="50" viewBox="0 0 12 50"><defs><clipPath id="cMessag"><rect x="0" y="23" width="12" height="26"/></clipPath></defs><path d="M4 4L8.400 8M8.400 4L4 8" stroke="#000" stroke-width="1.400"/><path d="M7.600 15V18.200L5.400 16.600Z" fill="#000"/><g clip-path="url(#cMessag)"><text transform="translate(9,47.300) rotate(-90)" font-family="Liberation Sans, sans-serif" font-size="8.600" letter-spacing="-0.1" fill="#000">Messag</text></g></svg>
<div class="abs" style="left:14px;top:534.800px;width:262.500px;height:49.500px;background:#fff;box-sizing:border-box;border-top:1px solid #808080;border-left:1px solid #a0a0a0;border-bottom:1px solid #a8a49c"></div>
<div class="abs" style="left:56px;top:536px;width:1px;height:47px;background:#d0d0d0"></div>
<div class="abs" style="left:56px;top:553px;width:8px;height:1px;background:#d8d8d8"></div>
<div class="abs" style="left:14px;top:535.500px;width:249px;height:48px;overflow:hidden">
<span class="t" style="left:83.0px;top:4.2px;font-size:9.2px;letter-spacing:-0.235px;color:#101010;">Adaptive Passes did not converge based</span>
<span class="t" style="left:83.0px;top:14.8px;font-size:9.2px;letter-spacing:-0.245px;color:#101010;">on specified criteria. (2:29:53  июл 05,</span>
<span class="t" style="left:83.0px;top:25.3px;font-size:9.2px;letter-spacing:-0.306px;color:#101010;">2014)</span>
<span class="t" style="left:83.0px;top:37.4px;font-size:9.2px;letter-spacing:-0.255px;color:#101010;">Solution Setup &#x27;Setup1&#x27;, Sweep &#x27;Sweep1&#x27;:</span>
</div>
<svg class="abs" style="left:78px;top:545px" width="14" height="15" viewBox="0 0 14 15"><path d="M6.700 1.300L12.600 13.400H0.800Z" fill="#f8e020" stroke="#807010" stroke-width="0.900" stroke-linejoin="round"/><path d="M6.700 5V9.800" stroke="#181818" stroke-width="1.700"/><circle cx="6.700" cy="11.600" r="0.950" fill="#181818"/></svg>
<div class="abs" style="left:263.500px;top:536px;width:12px;height:47.500px;background:#eae8e3"></div>
<div class="raised" style="left:263.500px;top:537.500px;width:12px;height:10px"></div>
<div class="raised" style="left:263.500px;top:547.500px;width:12px;height:21.500px"></div>
<div class="raised" style="left:263.500px;top:572.500px;width:12px;height:10px"></div>
<svg class="abs" style="left:263.500px;top:537.500px" width="12" height="46" viewBox="0 0 12 46"><path d="M3 6.300L5.700 3.300L8.400 6.300Z" fill="#000"/><path d="M3 38.700L5.700 41.700L8.400 38.700Z" fill="#000"/></svg>
<div class="abs" style="left:280px;top:532px;width:1px;height:55px;background:#f0eee8"></div>
<div class="abs" style="left:282.500px;top:532px;width:1.600px;height:55px;background:#505050"></div>
<div class="abs" style="left:286.2px;top:534.500px;width:11.500px;height:50.500px;box-sizing:border-box;border:1px solid #8a8680;border-radius:2px"></div>
<svg class="abs" style="left:286.2px;top:535px" width="12" height="50" viewBox="0 0 12 50"><defs><clipPath id="cProgre"><rect x="0" y="23" width="12" height="26"/></clipPath></defs><path d="M4 4L8.400 8M8.400 4L4 8" stroke="#000" stroke-width="1.400"/><path d="M7.600 15V18.200L5.400 16.600Z" fill="#000"/><g clip-path="url(#cProgre)"><text transform="translate(9,47.300) rotate(-90)" font-family="Liberation Sans, sans-serif" font-size="8.600" letter-spacing="-0.1" fill="#000">Progre</text></g></svg>
<div class="abs" style="left:298.500px;top:534.500px;width:538.500px;height:50px;background:#fff;box-sizing:border-box;border-top:1.500px solid #606060;border-left:1.500px solid #707070;border-bottom:1px solid #c8c4bc;border-right:1px solid #c8c4bc"></div>
<div class="abs" style="left:0;top:586.500px;width:839px;height:1px;background:#e8e6e0"></div>
<div class="abs" style="left:667.3px;top:591.500px;width:28.5px;height:12.500px;box-sizing:border-box;border:1px solid;border-color:#a09c94 #f4f2ee #f4f2ee #a09c94"></div>
<div class="abs" style="left:698px;top:591.500px;width:53.5px;height:12.500px;box-sizing:border-box;border:1px solid;border-color:#404040 #404040 #404040 #404040"></div>
<div class="abs" style="left:754px;top:591.500px;width:28.5px;height:12.500px;box-sizing:border-box;border:1px solid;border-color:#a09c94 #f4f2ee #f4f2ee #a09c94"></div>
<div class="abs" style="left:784.7px;top:591.500px;width:55px;height:12.500px;box-sizing:border-box;border:1px solid;border-color:#404040 #404040 #404040 #404040"></div>
<span class="t" style="left:668.8px;top:594.3px;font-size:9.3px;letter-spacing:-0.703px;color:#202020;">X</span>
<span class="t" style="left:702.0px;top:594.3px;font-size:9.3px;letter-spacing:-0.241px;color:#a8a6a0;">1.8025</span>
<span class="t" style="left:755.6px;top:594.3px;font-size:9.3px;letter-spacing:-0.888px;color:#202020;">Y1</span>
<span class="t" style="left:789.0px;top:594.3px;font-size:9.3px;letter-spacing:-0.160px;color:#a8a6a0;">82.1508</span>
<!--TASKBAR-->
<div class="abs" style="left:0;top:605.500px;width:839px;height:1px;background:#f4f2ee"></div>
<div class="raised" style="left:0.800px;top:607.500px;width:42.500px;height:18.300px"></div>
<svg class="abs" style="left:3px;top:609px" width="13.500" height="13" viewBox="0 0 12 12.500" preserveAspectRatio="none"><path d="M1 2.500Q3 1 5.500 2.200V6Q3 4.800 1 6.300Z" fill="#e04830"/><path d="M6.300 2.500Q8.500 3.600 11 2V5.800Q8.500 7.400 6.300 6.300Z" fill="#48a048"/><path d="M1 7.200Q3 5.700 5.500 6.900V10.700Q3 9.500 1 11Z" fill="#3860d0"/><path d="M6.300 7.200Q8.500 8.300 11 6.700V10.500Q8.500 12.100 6.300 11Z" fill="#e8c030"/></svg>
<span class="t" style="left:17.9px;top:613.0px;font-size:9.4px;letter-spacing:0.354px;font-weight:bold;">Пуск</span>
<div class="abs" style="left:50.5px;top:608px;width:1px;height:17px;background:#808080"></div><div class="abs" style="left:51.5px;top:608px;width:1px;height:17px;background:#fff"></div>
<div class="abs" style="left:176.5px;top:608px;width:1px;height:17px;background:#808080"></div><div class="abs" style="left:177.5px;top:608px;width:1px;height:17px;background:#fff"></div>
<div class="abs" style="left:647px;top:608px;width:1.500px;height:17px;background:#f8f6f2"></div><div class="abs" style="left:648.500px;top:608px;width:1px;height:17px;background:#908c84"></div>
<div class="raised" style="left:180px;top:607.500px;width:130.500px;height:17.500px"></div>
<span class="t" style="left:200.0px;top:612.6px;font-size:9.3px;letter-spacing:-0.125px;">Краснодарский Форум ...</span>
<div class="raised" style="left:314px;top:607.500px;width:129.500px;height:17.500px"></div>
<span class="t" style="left:333.5px;top:612.6px;font-size:9.3px;letter-spacing:-0.165px;">Total Commander 7.57 - ...</span>
<div class="abs" style="left:447px;top:607.500px;width:131.500px;height:18.500px;background:#eceae6;box-shadow:inset 1px 1px 0 #404040,inset -1px -1px 0 #fff,inset 2px 2px 0 #808080"></div>
<span class="t" style="left:468.7px;top:613.5px;font-size:9.4px;letter-spacing:-0.108px;font-weight:bold;">Ansoft HFSS - patchB...</span>
<div class="abs" style="left:668.500px;top:607.500px;width:170px;height:18.500px;box-sizing:border-box;border:1px solid;border-color:#808080 #fff #fff #808080"></div>
<span class="t" style="left:811.3px;top:613.7px;font-size:9.3px;letter-spacing:-0.200px;">2:45</span>
<svg class="abs" style="left:0;top:605px" width="839" height="24" viewBox="0 605 839 24" font-family="Liberation Sans, sans-serif">

<!-- IE -->
<circle cx="65" cy="617.500" r="4.600" fill="#a8d0f8" stroke="#2070d0" stroke-width="3"/><path d="M61 617.500H70" stroke="#2070d0" stroke-width="2"/><path d="M58.500 621Q56.500 626 63 622M71.500 613Q73.500 609 67 611.500" stroke="#e8b020" stroke-width="1.200" fill="none"/><rect x="66" y="618.400" width="5" height="2.400" fill="#dbd8d1"/>
<g transform="translate(76,610.400)"><circle cx="6.600" cy="6.600" r="6.400" fill="#d82020"/><ellipse cx="6.600" cy="6.600" rx="2.300" ry="4.300" fill="#fff"/><path d="M2 3Q6 0 11 3" stroke="#f09090" stroke-width="1" fill="none"/></g>
<!-- blue tool -->
<path d="M96 611L99 610.500L108 619.500Q109.500 622.500 106.500 623.500Q104 624 102.500 621.500L96.500 614.500Z" fill="#3868c8" stroke="#183878" stroke-width="0.700"/><path d="M98 612.500L106 621" stroke="#a8c8f8" stroke-width="1.200"/>
<!-- green square -->
<rect x="115" y="611" width="11.500" height="12" fill="#28a848" stroke="#106828" stroke-width="0.800"/><path d="M118 613.500V620.500H123.500V613.500M120.800 613.500V618" stroke="#fff" stroke-width="1.400" fill="none"/>
<!-- chrome -->
<circle cx="139" cy="617.300" r="6" fill="#e8c020"/><path d="M139 617.300L133.800 614.300A6 6 0 0 1 144.200 614.300Z" fill="#d83020"/><path d="M139 617.300L133.800 614.300A6 6 0 0 0 139 623.300Z" fill="#30a040"/><circle cx="139" cy="617.300" r="2.700" fill="#fff"/><circle cx="139" cy="617.300" r="2" fill="#4080e0"/>
<text x="162.500" y="618.300" font-size="9" font-weight="bold" fill="#000">»</text>
<!-- task button icons -->
<g transform="translate(183.500,610.400)"><circle cx="6.600" cy="6.600" r="6.400" fill="#d82020"/><ellipse cx="6.600" cy="6.600" rx="2.300" ry="4.300" fill="#fff"/><path d="M2 3Q6 0 11 3" stroke="#f09090" stroke-width="1" fill="none"/></g>
<rect x="318" y="610.500" width="12.500" height="12.500" rx="2" fill="#5898d8" stroke="#2858a0" stroke-width="0.800"/><circle cx="324.200" cy="616.800" r="3.600" fill="none" stroke="#e8f0ff" stroke-width="1.800"/><path d="M320 613.500L323 612L322.500 615Z" fill="#fff"/>
<g transform="translate(451,610)"><circle cx="7" cy="7" r="6.800" fill="#7828a0"/><path d="M3 10.500L6.800 3L10.800 10.500Z" fill="#b868d0"/><path d="M4.800 10.500L7 5.500M6.800 10.500L8 6.500M8.800 10.500L8.800 7.800" stroke="#fff" stroke-width="0.900"/></g>
<!-- RL -->
<rect x="655.400" y="610.400" width="10.400" height="13" fill="#183890"/><text x="656.200" y="620.700" font-size="8" fill="#fff" letter-spacing="-0.500">RL</text>
<!-- tray icons -->
<path d="M672 619.500Q671 615 675 614Q676 610.800 679.500 612Q683.500 612 683.500 616Q684.500 619.500 680 619.500Z" fill="#38a838"/><rect x="672.500" y="619.500" width="11" height="3" fill="#808890"/>
<rect x="686" y="611" width="12" height="12" fill="#2850a0"/><rect x="688" y="613" width="6" height="5" fill="#a8c8f0"/><path d="M692 615L697 622" stroke="#d8e8ff" stroke-width="1.600"/>
<rect x="700.500" y="612" width="13.500" height="3.600" fill="#fff"/><rect x="700.500" y="615.600" width="13.500" height="3.600" fill="#2848c0"/><rect x="700.500" y="619.200" width="13.500" height="3.600" fill="#d82828"/>
<path d="M716 611.500L726 610.500L728 621.500L718 623.500Z" fill="#1830a8" stroke="#101868" stroke-width="0.800"/><path d="M719.500 614L724.500 613.500L725.500 619L720.500 620Z" fill="#3858d0"/>
<circle cx="736.400" cy="616.500" r="5.200" fill="#686868" stroke="#383838" stroke-width="0.800"/><path d="M733.500 616.500A3 3 0 0 1 739.300 615.500" stroke="#d0d0d0" stroke-width="1.400" fill="none"/><circle cx="736.400" cy="617" r="1.300" fill="#b0b0b0"/>
<circle cx="751" cy="617" r="5.600" fill="#f4ece8" stroke="#c0b0a8" stroke-width="0.600"/><circle cx="752.500" cy="618.500" r="3.600" fill="#e02020"/><path d="M750.800 616.800L754.200 620.200M754.200 616.800L750.800 620.200" stroke="#fff" stroke-width="1.100"/>
<rect x="759.300" y="610.500" width="13.200" height="13" fill="#101868"/><circle cx="765.900" cy="617" r="1.700" fill="#f0c040"/><path d="M763 613.500A4.500 4.500 0 0 0 763 620.500M768.800 613.500A4.500 4.500 0 0 1 768.800 620.500" stroke="#f0c040" stroke-width="1.100" fill="none"/>
<path d="M776 616Q776 612 779.500 611.500Q784 612 784.500 616.500Q784.500 621.500 780.500 623Q776.500 622.500 776 619Z" fill="#e8b8a0"/><path d="M778 613.500Q780 611.500 782.500 613.500" stroke="#f8e0d0" stroke-width="1.200" fill="none"/>
<path d="M789.500 614H792.500L793.800 612H798L799.300 614H802V622.500H789.500Z" fill="#d8ecf8" stroke="#58a8d8" stroke-width="1.100"/><circle cx="795.800" cy="618" r="2.600" fill="#fff" stroke="#58a8d8" stroke-width="1.100"/>
</svg>
</div>
</body>
</html>
